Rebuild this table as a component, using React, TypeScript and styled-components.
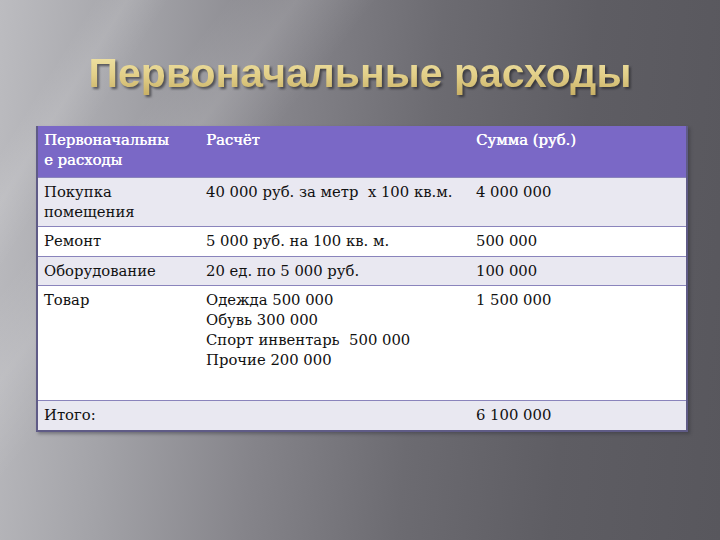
import React, { FC } from "react"
import styled, { createGlobalStyle } from "styled-components"

const GlobalStyle = createGlobalStyle`
  html, body {
    margin: 0;
    padding: 0;
    width: 720px;
    height: 540px;
    overflow: hidden;
  }
`

interface Line {
  name: React.ReactNode
  calc: React.ReactNode
  sum: string
  height: number
  shade: boolean
}

const lines: Line[] = [
  { name: <>Покупка<br />помещения</>, calc: "40 000 руб. за метр  х 100 кв.м.", sum: "4 000 000", height: 49, shade: true },
  { name: "Ремонт", calc: "5 000 руб. на 100 кв. м.", sum: "500 000", height: 30, shade: false },
  { name: "Оборудование", calc: "20 ед. по 5 000 руб.", sum: "100 000", height: 29, shade: true },
  {
    name: "Товар",
    calc: <>Одежда 500 000<br />Обувь 300 000<br />Спорт инвентарь  500 000<br />Прочие 200 000</>,
    sum: "1 500 000",
    height: 115,
    shade: false,
  },
  { name: "Итого:", calc: "", sum: "6 100 000", height: 30, shade: true },
]

const App: FC = () => (
  <>
    <GlobalStyle />
    <Slide>
      <Title>Первоначальные расходы</Title>
      <Table>
        <colgroup>
          <col style={{ width: 163 }} />
          <col style={{ width: 270 }} />
          <col />
        </colgroup>
        <thead>
          <tr>
            <HeadCell>Первоначальны<br />е расходы</HeadCell>
            <HeadCell>Расчёт</HeadCell>
            <HeadCell>Сумма (руб.)</HeadCell>
          </tr>
        </thead>
        <tbody>
          {lines.map((l, i) => (
            <Row key={i} $shade={l.shade} $h={l.height}>
              <Cell>{l.name}</Cell>
              <Cell>{l.calc}</Cell>
              <Cell>{l.sum}</Cell>
            </Row>
          ))}
        </tbody>
      </Table>
    </Slide>
  </>
)

const Slide = styled.div`
  width: 720px;
  height: 540px;
  box-sizing: border-box;
  padding: 49px 32px 0 36px;
  display: flex;
  flex-direction: column;
  align-items: flex-start;
  background:
    linear-gradient(122deg, transparent 0%, transparent 9%, rgba(255,255,255,0.10) 12%, transparent 16%, transparent 100%),
    linear-gradient(128deg, transparent 0%, transparent 20%, rgba(255,255,255,0.12) 26%, transparent 33%, transparent 100%),
    linear-gradient(95deg, #bcbcc0 0%, #a3a3a8 18%, #85848a 38%, #6c6b71 58%, #5e5d63 78%, #58575d 100%);
`

const Title = styled.h1`
  align-self: center;
  margin: 0 0 0 -4px;
  font-family: "Liberation Sans", Arial, sans-serif;
  font-weight: bold;
  font-size: 41px;
  line-height: 48px;
  color: #e3d18e;
  background: linear-gradient(180deg, #f3e8ad 0%, #e2cf88 55%, #c6ad62 100%);
  -webkit-background-clip: text;
  background-clip: text;
  -webkit-text-fill-color: transparent;
  filter: drop-shadow(2px 2px 1px rgba(30, 30, 35, 0.6));
`

const Table = styled.table`
  margin-top: 29px;
  width: 652px;
  border-collapse: collapse;
  table-layout: fixed;
  font-family: "DejaVu Serif", "Liberation Serif", serif;
  font-size: 14.8px;
  line-height: 20px;
  color: #111;
  border-left: 2px solid #5f5b86;
  border-right: 2px solid #5f5b86;
  border-bottom: 2px solid #5f5b86;
  box-shadow: 2px 2px 3px rgba(40, 40, 50, 0.4);
`

const HeadCell = styled.th`
  height: 51px;
  box-sizing: border-box;
  padding: 4px 6px 7px;
  vertical-align: top;
  text-align: left;
  font-weight: normal;
  color: #fff;
  text-shadow: 0.4px 0 0 #fff;
  background: #7a68c6;
`

const Row = styled.tr<{ $shade: boolean; $h: number }>`
  height: ${p => p.$h}px;
  background: ${p => (p.$shade ? "#e9e8f1" : "#ffffff")};
  border-top: 1px solid #8a84bc;
`

const Cell = styled.td`
  box-sizing: border-box;
  padding: 4px 6px 0;
  vertical-align: top;
  white-space: pre;
`

export default App
